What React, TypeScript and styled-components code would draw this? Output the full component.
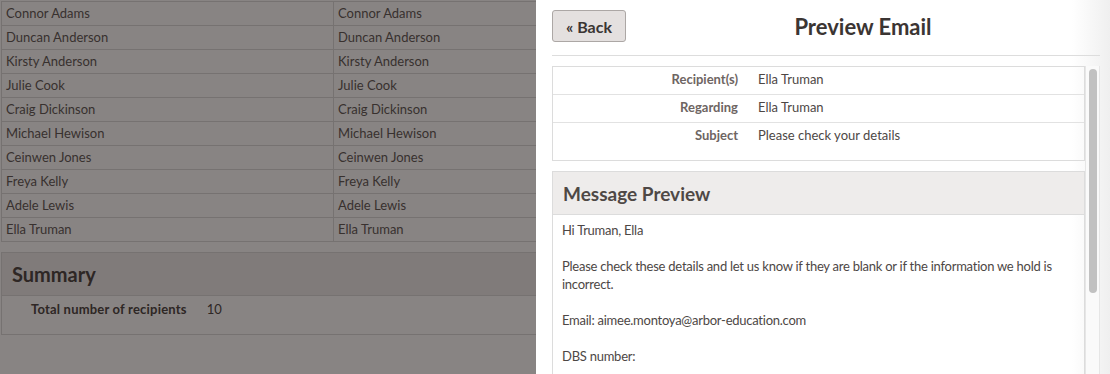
import styled, { createGlobalStyle } from 'styled-components';

const GlobalStyle = createGlobalStyle`
    html, body {
        margin: 0;
        padding: 0;
        background: #ffffff;
        overflow: hidden;
    }
    body {
        font-family: Lato, 'Open Sans', sans-serif;
        font-size: 13px;
        color: #4d4745;
    }
    * {
        box-sizing: border-box;
    }
`;

const Page = styled.div`
    padding: 1px 0 0 1px;
    width: 1110px;
`;

const RecipientTable = styled.div`
    display: grid;
    grid-template-columns: 332px 1fr;
    border-top: 1px solid #dadada;
    border-left: 1px solid #dadada;
`;

const Cell = styled.div`
    height: 24px;
    line-height: 23px;
    padding-left: 4px;
    border-bottom: 1px solid #dadada;
    border-right: 1px solid #dadada;
    color: #5e5856;
`;

const SummaryBox = styled.div`
    margin-top: 10px;
    border: 1px solid #dadada;
`;

const SummaryHeader = styled.div`
    height: 43px;
    background: #eeecec;
    border-bottom: 1px solid #dadada;
    padding-left: 10px;
    display: flex;
    align-items: center;
    font-size: 20px;
    font-weight: 700;
    color: #4a4442;
`;

const SummaryBody = styled.div`
    padding: 4px 0 16px 29px;
    display: flex;
    gap: 20px;
    line-height: 18px;
    color: #4a4442;
`;

const SummaryLabel = styled.span`
    font-weight: 700;
    letter-spacing: 0.2px;
`;

const Backdrop = styled.div`
    position: fixed;
    inset: 0;
    background: rgba(18, 10, 8, 0.5);
`;

const Drawer = styled.aside`
    position: fixed;
    top: 0;
    right: 0;
    bottom: 0;
    width: 574px;
    display: flex;
    flex-direction: column;
    background: linear-gradient(to right, #ffffff 0, #ffffff calc(100% - 38px), #efefef 100%);
`;

const DrawerHeader = styled.header`
    display: flex;
    align-items: center;
    margin: 0 10px 0 16px;
    padding: 10px 0 13px;
    border-bottom: 1px solid #dddddd;
`;

const BackButton = styled.button`
    width: 74px;
    height: 32px;
    border: 1px solid #aca7a5;
    border-radius: 3px;
    background: #e4e0df;
    font-family: inherit;
    font-size: 16px;
    font-weight: 700;
    color: #3b3533;
    padding: 0;
    cursor: pointer;
`;

const Title = styled.h1`
    flex: 1;
    margin: 0;
    text-align: center;
    font-size: 22px;
    font-weight: 700;
    color: #3b3533;
`;

const ScrollRow = styled.div`
    flex: 1;
    display: flex;
    margin: 10px 10px 0 16px;
    min-height: 0;
`;

const ScrollContent = styled.div`
    flex: 1;
    overflow: hidden;
    display: flex;
    flex-direction: column;
    gap: 10px;
`;

const Track = styled.div`
    width: 15px;
    flex-shrink: 0;
    background: #fafafa;
    border-left: 1px solid #e6e6e6;
    border-right: 1px solid #e6e6e6;
    padding: 3px 2px 0 3px;
`;

const Thumb = styled.div`
    height: 224px;
    border-radius: 4px;
    background: #c1c1c1;
`;

const DetailBox = styled.div`
    border: 1px solid #dcdcdc;
    padding-bottom: 10px;
`;

const DetailRow = styled.div<{ $last?: boolean }>`
    display: grid;
    grid-template-columns: 185px 1fr;
    column-gap: 20px;
    height: ${(p) => (p.$last ? '27px' : '28px')};
    line-height: 25px;
    border-bottom: ${(p) => (p.$last ? 'none' : '1px solid #e2e2e2')};
`;

const DetailLabel = styled.div`
    text-align: right;
    font-weight: 700;
    color: #6e6562;
`;

const DetailValue = styled.div`
    color: #4d4745;
`;

const MessageBox = styled.div`
    border: 1px solid #dcdcdc;
    flex-shrink: 0;
`;

const MessageHeader = styled.div`
    height: 43px;
    background: #eeeceb;
    border-bottom: 1px solid #dcdcdc;
    padding-left: 10px;
    display: flex;
    align-items: center;
    font-size: 19px;
    font-weight: 700;
    color: #4e4845;
`;

const MessageBody = styled.div`
    padding: 6px 9px 10px;
    line-height: 18px;
    letter-spacing: -0.25px;
    color: #4d4745;

    p {
        margin: 0 0 18px;
    }
`;

const recipients = [
    'Connor Adams',
    'Duncan Anderson',
    'Kirsty Anderson',
    'Julie Cook',
    'Craig Dickinson',
    'Michael Hewison',
    'Ceinwen Jones',
    'Freya Kelly',
    'Adele Lewis',
    'Ella Truman',
];

const details = [
    { label: 'Recipient(s)', value: 'Ella Truman' },
    { label: 'Regarding', value: 'Ella Truman' },
    { label: 'Subject', value: 'Please check your details' },
];

const App = () => {
    return (
        <>
            <GlobalStyle />
            <Page>
                <RecipientTable>
                    {recipients.flatMap((name) => [
                        <Cell key={name + '-a'}>{name}</Cell>,
                        <Cell key={name + '-b'}>{name}</Cell>,
                    ])}
                </RecipientTable>
                <SummaryBox>
                    <SummaryHeader>Summary</SummaryHeader>
                    <SummaryBody>
                        <SummaryLabel>Total number of recipients</SummaryLabel>
                        <span>10</span>
                    </SummaryBody>
                </SummaryBox>
            </Page>
            <Backdrop />
            <Drawer>
                <DrawerHeader>
                    <BackButton>« Back</BackButton>
                    <Title>Preview Email</Title>
                </DrawerHeader>
                <ScrollRow>
                    <ScrollContent>
                        <DetailBox>
                            {details.map((d, i) => (
                                <DetailRow key={d.label} $last={i === details.length - 1}>
                                    <DetailLabel>{d.label}</DetailLabel>
                                    <DetailValue>{d.value}</DetailValue>
                                </DetailRow>
                            ))}
                        </DetailBox>
                        <MessageBox>
                            <MessageHeader>Message Preview</MessageHeader>
                            <MessageBody>
                                <p>Hi Truman, Ella</p>
                                <p>
                                    Please check these details and let us know if they are blank or if the
                                    information we hold is incorrect.
                                </p>
                                <p>Email: aimee.montoya@arbor-education.com</p>
                                <p>DBS number:</p>
                            </MessageBody>
                        </MessageBox>
                    </ScrollContent>
                    <Track>
                        <Thumb />
                    </Track>
                </ScrollRow>
            </Drawer>
        </>
    );
};

export default App;
